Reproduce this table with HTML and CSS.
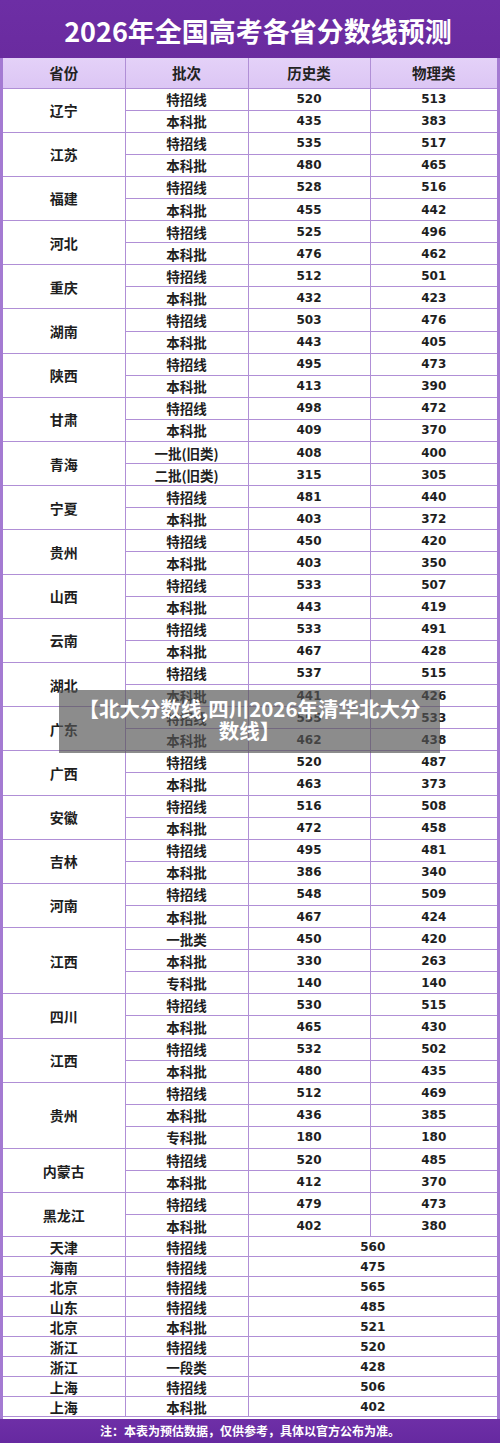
FILE: index.html
```html
<!DOCTYPE html>
<html lang="zh-CN">
<head>
<meta charset="utf-8">
<title>2026年全国高考各省分数线预测</title>
<link rel="stylesheet" href="styles.css">
</head>
<body>
<div class="page">
  <div class="title">2026年全国高考各省分数线预测</div>
  <div class="frame">
    <table class="grid">
      <colgroup><col class="c1"><col class="c2"><col class="c3"><col class="c4"></colgroup>
      <thead>
        <tr class="head"><th>省份</th><th>批次</th><th>历史类</th><th>物理类</th></tr>
      </thead>
      <tbody>
        <tr class="r"><td class="pv" rowspan="2">辽宁</td><td class="bt">特招线</td><td class="n">520</td><td class="n">513</td></tr>
        <tr class="r"><td class="bt">本科批</td><td class="n">435</td><td class="n">383</td></tr>
        <tr class="r"><td class="pv" rowspan="2">江苏</td><td class="bt">特招线</td><td class="n">535</td><td class="n">517</td></tr>
        <tr class="r"><td class="bt">本科批</td><td class="n">480</td><td class="n">465</td></tr>
        <tr class="r"><td class="pv" rowspan="2">福建</td><td class="bt">特招线</td><td class="n">528</td><td class="n">516</td></tr>
        <tr class="r"><td class="bt">本科批</td><td class="n">455</td><td class="n">442</td></tr>
        <tr class="r"><td class="pv" rowspan="2">河北</td><td class="bt">特招线</td><td class="n">525</td><td class="n">496</td></tr>
        <tr class="r"><td class="bt">本科批</td><td class="n">476</td><td class="n">462</td></tr>
        <tr class="r"><td class="pv" rowspan="2">重庆</td><td class="bt">特招线</td><td class="n">512</td><td class="n">501</td></tr>
        <tr class="r"><td class="bt">本科批</td><td class="n">432</td><td class="n">423</td></tr>
        <tr class="r"><td class="pv" rowspan="2">湖南</td><td class="bt">特招线</td><td class="n">503</td><td class="n">476</td></tr>
        <tr class="r"><td class="bt">本科批</td><td class="n">443</td><td class="n">405</td></tr>
        <tr class="r"><td class="pv" rowspan="2">陕西</td><td class="bt">特招线</td><td class="n">495</td><td class="n">473</td></tr>
        <tr class="r"><td class="bt">本科批</td><td class="n">413</td><td class="n">390</td></tr>
        <tr class="r"><td class="pv" rowspan="2">甘肃</td><td class="bt">特招线</td><td class="n">498</td><td class="n">472</td></tr>
        <tr class="r"><td class="bt">本科批</td><td class="n">409</td><td class="n">370</td></tr>
        <tr class="r"><td class="pv" rowspan="2">青海</td><td class="bt">一批(旧类)</td><td class="n">408</td><td class="n">400</td></tr>
        <tr class="r"><td class="bt">二批(旧类)</td><td class="n">315</td><td class="n">305</td></tr>
        <tr class="r"><td class="pv" rowspan="2">宁夏</td><td class="bt">特招线</td><td class="n">481</td><td class="n">440</td></tr>
        <tr class="r"><td class="bt">本科批</td><td class="n">403</td><td class="n">372</td></tr>
        <tr class="r"><td class="pv" rowspan="2">贵州</td><td class="bt">特招线</td><td class="n">450</td><td class="n">420</td></tr>
        <tr class="r"><td class="bt">本科批</td><td class="n">403</td><td class="n">350</td></tr>
        <tr class="r"><td class="pv" rowspan="2">山西</td><td class="bt">特招线</td><td class="n">533</td><td class="n">507</td></tr>
        <tr class="r"><td class="bt">本科批</td><td class="n">443</td><td class="n">419</td></tr>
        <tr class="r"><td class="pv" rowspan="2">云南</td><td class="bt">特招线</td><td class="n">533</td><td class="n">491</td></tr>
        <tr class="r"><td class="bt">本科批</td><td class="n">467</td><td class="n">428</td></tr>
        <tr class="r"><td class="pv" rowspan="2">湖北</td><td class="bt">特招线</td><td class="n">537</td><td class="n">515</td></tr>
        <tr class="r"><td class="bt">本科批</td><td class="n">441</td><td class="n">426</td></tr>
        <tr class="r"><td class="pv" rowspan="2">广东</td><td class="bt">特招线</td><td class="n">555</td><td class="n">533</td></tr>
        <tr class="r"><td class="bt">本科批</td><td class="n">462</td><td class="n">438</td></tr>
        <tr class="r"><td class="pv" rowspan="2">广西</td><td class="bt">特招线</td><td class="n">520</td><td class="n">487</td></tr>
        <tr class="r"><td class="bt">本科批</td><td class="n">463</td><td class="n">373</td></tr>
        <tr class="r"><td class="pv" rowspan="2">安徽</td><td class="bt">特招线</td><td class="n">516</td><td class="n">508</td></tr>
        <tr class="r"><td class="bt">本科批</td><td class="n">472</td><td class="n">458</td></tr>
        <tr class="r"><td class="pv" rowspan="2">吉林</td><td class="bt">特招线</td><td class="n">495</td><td class="n">481</td></tr>
        <tr class="r"><td class="bt">本科批</td><td class="n">386</td><td class="n">340</td></tr>
        <tr class="r"><td class="pv" rowspan="2">河南</td><td class="bt">特招线</td><td class="n">548</td><td class="n">509</td></tr>
        <tr class="r"><td class="bt">本科批</td><td class="n">467</td><td class="n">424</td></tr>
        <tr class="r"><td class="pv" rowspan="3">江西</td><td class="bt">一批类</td><td class="n">450</td><td class="n">420</td></tr>
        <tr class="r"><td class="bt">本科批</td><td class="n">330</td><td class="n">263</td></tr>
        <tr class="r"><td class="bt">专科批</td><td class="n">140</td><td class="n">140</td></tr>
        <tr class="r"><td class="pv" rowspan="2">四川</td><td class="bt">特招线</td><td class="n">530</td><td class="n">515</td></tr>
        <tr class="r"><td class="bt">本科批</td><td class="n">465</td><td class="n">430</td></tr>
        <tr class="r"><td class="pv" rowspan="2">江西</td><td class="bt">特招线</td><td class="n">532</td><td class="n">502</td></tr>
        <tr class="r"><td class="bt">本科批</td><td class="n">480</td><td class="n">435</td></tr>
        <tr class="r"><td class="pv" rowspan="3">贵州</td><td class="bt">特招线</td><td class="n">512</td><td class="n">469</td></tr>
        <tr class="r"><td class="bt">本科批</td><td class="n">436</td><td class="n">385</td></tr>
        <tr class="r"><td class="bt">专科批</td><td class="n">180</td><td class="n">180</td></tr>
        <tr class="r"><td class="pv" rowspan="2">内蒙古</td><td class="bt">特招线</td><td class="n">520</td><td class="n">485</td></tr>
        <tr class="r"><td class="bt">本科批</td><td class="n">412</td><td class="n">370</td></tr>
        <tr class="r"><td class="pv" rowspan="2">黑龙江</td><td class="bt">特招线</td><td class="n">479</td><td class="n">473</td></tr>
        <tr class="r"><td class="bt">本科批</td><td class="n">402</td><td class="n">380</td></tr>
        <tr class="s"><td class="pv">天津</td><td class="bt">特招线</td><td class="n" colspan="2">560</td></tr>
        <tr class="s"><td class="pv">海南</td><td class="bt">特招线</td><td class="n" colspan="2">475</td></tr>
        <tr class="s"><td class="pv">北京</td><td class="bt">特招线</td><td class="n" colspan="2">565</td></tr>
        <tr class="s"><td class="pv">山东</td><td class="bt">特招线</td><td class="n" colspan="2">485</td></tr>
        <tr class="s"><td class="pv">北京</td><td class="bt">本科批</td><td class="n" colspan="2">521</td></tr>
        <tr class="s"><td class="pv">浙江</td><td class="bt">特招线</td><td class="n" colspan="2">520</td></tr>
        <tr class="s"><td class="pv">浙江</td><td class="bt">一段类</td><td class="n" colspan="2">428</td></tr>
        <tr class="s"><td class="pv">上海</td><td class="bt">特招线</td><td class="n" colspan="2">506</td></tr>
        <tr class="s"><td class="pv">上海</td><td class="bt">本科批</td><td class="n" colspan="2">402</td></tr>
      </tbody>
    </table>
  </div>
  <div class="note">注：本表为预估数据，仅供参考，具体以官方公布为准。</div>
  <div class="caption">【北大分数线,四川2026年清华北大分数线】</div>
</div>
</body>
</html>
```
FILE: styles.css
```css
html, body {
  margin: 0;
  padding: 0;
  background: #ffffff;
}
body {
  font-family: "Noto Sans CJK SC", "Noto Sans", sans-serif;
  color: #1e1e1e;
}
.page {
  position: relative;
  width: 500px;
  height: 1444px;
  overflow: hidden;
  background: #ffffff;
}
.title {
  height: 58px;
  box-sizing: border-box;
  padding: 3px 0 0 16px;
  line-height: 55px;
  background: linear-gradient(180deg, #6d2ea5 0%, #6a2b9f 100%);
  color: #ffffff;
  font-size: 27px;
  font-weight: 700;
  text-align: center;
  white-space: nowrap;
}
.frame {
  border-left: 3px solid #a47ad2;
  border-right: 3px solid #a47ad2;
  background: #ffffff;
  padding-bottom: 2px;
}
.grid {
  width: 494px;
  border-collapse: collapse;
  table-layout: fixed;
}
.c1 { width: 122px; }
.c2 { width: 123px; }
.c3 { width: 122px; }
.c4 { width: 127px; }
.grid th, .grid td {
  border: 1px solid #b08fd6;
  padding: 0;
  text-align: center;
  vertical-align: middle;
  font-weight: 700;
  white-space: nowrap;
}
.grid tr:first-child th { border-top: none; }
.grid th:first-child, .grid td.pv { border-left: none; }
.grid th:last-child, .grid tr > td:last-child { border-right: none; }
.head {
  height: 30px;
  background: linear-gradient(180deg, #e4d1f8 0%, #dcc6f4 100%);
}
.head th {
  font-size: 14.5px;
  color: #222222;
  line-height: 20px;
}
.r { height: 22.1px; }
.s { height: 20px; }
.pv {
  font-size: 14px;
  line-height: 18px;
  color: #1e1e1e;
}
.bt {
  font-size: 13.5px;
  line-height: 18px;
  color: #1e1e1e;
}
.n {
  font-family: "DejaVu Sans", "Noto Sans CJK SC", sans-serif;
  font-size: 12px;
  line-height: 16px;
  color: #1e1e1e;
}
.note {
  height: 24px;
  line-height: 24px;
  background: linear-gradient(180deg, #6e2fa7 0%, #6629a0 100%);
  color: #ffffff;
  font-size: 12px;
  font-weight: 700;
  text-align: center;
}
.caption {
  position: absolute;
  left: 59px;
  top: 690px;
  width: 381px;
  height: 63px;
  box-sizing: border-box;
  padding: 7px 18px 0;
  background: rgba(85, 85, 85, 0.68);
  color: #ffffff;
  font-size: 20.5px;
  font-weight: 700;
  line-height: 22px;
  text-align: center;
}
```
